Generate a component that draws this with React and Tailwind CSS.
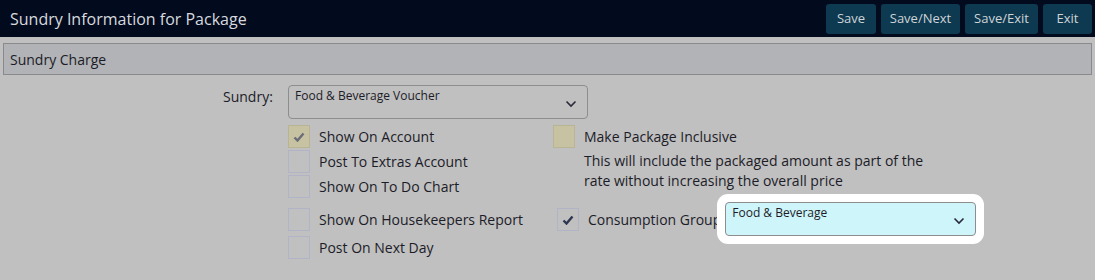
import React from 'react';

const font = { fontFamily: '"Open Sans", "Noto Sans", sans-serif' };

function Chevron() {
  return (
    <svg width="12" height="8" viewBox="0 0 12 8" className="shrink-0">
      <path d="M1.5 1.5 L6 6 L10.5 1.5" fill="none" stroke="#2a2a3a" strokeWidth="1.6" />
    </svg>
  );
}

function Check({ color }) {
  return (
    <svg width="12" height="10" viewBox="0 0 12 10">
      <path d="M1.5 5.5 L4.5 8.5 L10.5 1.5" fill="none" stroke={color} strokeWidth="2.4" />
    </svg>
  );
}

function Box({ checked, khaki, dark }) {
  const base = khaki
    ? 'bg-[#c6c2a2] border-[#b9b594]'
    : 'bg-transparent border-[#b1b4c6]';
  return (
    <div className={`w-[22px] h-[23px] border flex items-center justify-center shrink-0 ${base}`}>
      {checked && <Check color={dark ? '#2e3650' : '#6c6c78'} />}
    </div>
  );
}

function Row({ label, ...box }) {
  return (
    <div className="flex items-center gap-[9px] h-[25px]">
      <Box {...box} />
      <span className="text-[14px] text-[#1c1c28]">{label}</span>
    </div>
  );
}

function Select({ value, className = '' }) {
  return (
    <div className={`h-[34px] border border-[#8d8d8d] rounded-[4px] flex justify-between pl-[6px] pr-[10px] pt-[1px] ${className}`}>
      <span className="text-[12px] text-[#1c1c28] leading-[18px]">{value}</span>
      <div className="pt-[13px]"><Chevron /></div>
    </div>
  );
}

export default function App() {
  const buttons = [
    ['Save', 'w-[50px]'],
    ['Save/Next', 'w-[79px]'],
    ['Save/Exit', 'w-[73px]'],
    ['Exit', 'w-[49px]'],
  ];
  return (
    <div style={font} className="w-[1095px] h-[280px] bg-[#c0c0c0] overflow-hidden">
      <div className="h-[37px] bg-[#020a1e] flex items-center justify-between pl-[10px] pr-[3px]">
        <h1 className="text-[16px] text-[#d6dade]">Sundry Information for Package</h1>
        <div className="flex gap-[5px]">
          {buttons.map(([b, w]) => (
            <button key={b} className={`h-[30px] ${w} rounded-[3px] bg-[#0d3a50] text-[13px] text-[#cfd4d8]`}>
              {b}
            </button>
          ))}
        </div>
      </div>

      <div className="mx-[3px] mt-[6px] h-[32px] bg-[#b1b3b6] border border-[#888a8c] flex items-center pl-[6px]">
        <span className="text-[14px] text-[#1c1c28]">Sundry Charge</span>
      </div>

      <div className="pl-[223px] mt-[10px]">
        <div className="flex items-start">
          <span className="w-[50px] text-[14px] text-[#1c1c28] mt-[1px]">Sundry:</span>
          <Select value="Food & Beverage Voucher" className="ml-[15px] w-[300px]" />
        </div>

        <div className="ml-[65px] mt-[5px] grid grid-cols-[265px_1fr]">
          <div className="flex flex-col">
            <Row label="Show On Account" checked khaki />
            <Row label="Post To Extras Account" />
            <Row label="Show On To Do Chart" />
          </div>
          <div className="flex flex-col">
            <Row label="Make Package Inclusive" khaki />
            <p className="ml-[31px] mt-[2px] w-[350px] text-[14px] leading-[20px] text-[#1c1c28]">
              This will include the packaged amount as part of the rate without increasing the overall price
            </p>
          </div>

          <div className="flex flex-col mt-[5px]">
            <div className="h-[3px]" />
            <Row label="Show On Housekeepers Report" />
            <div className="h-[3px]" />
            <Row label="Post On Next Day" />
          </div>
          <div className="mt-[7px] ml-[4px] flex items-start">
            <div className="flex items-center gap-[9px] h-[25px] mt-[1px]">
              <Box checked dark />
              <span className="text-[14px] text-[#1c1c28] whitespace-nowrap">Consumption Group</span>
            </div>
            <Select
              value="Food & Beverage"
              className="relative z-10 ml-[4px] -mt-[4px] w-[251px] bg-[#cef5fa] ring-[8px] ring-white"
            />
          </div>
        </div>
      </div>
    </div>
  );
}
